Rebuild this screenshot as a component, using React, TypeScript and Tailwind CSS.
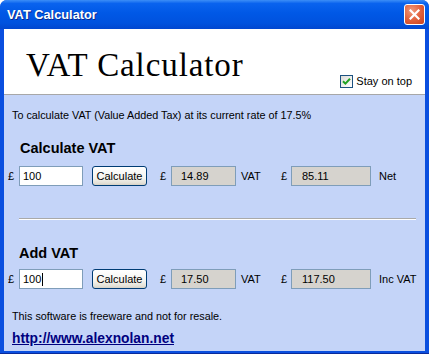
import React from "react"

const sans = "font-['Liberation_Sans',Arial,sans-serif]"

function XpButton() {
  return (
    <div className="ml-[9px] flex h-[20px] w-[55px] items-center justify-center rounded-[3px] border border-[#003c74] bg-[linear-gradient(180deg,#ffffff_0%,#f5f4ef_60%,#e3e0d6_90%,#d6d0c5_100%)] text-[11px] text-black">
      Calculate
    </div>
  )
}

function Row({ value, vat, total, label, caret }: { value: string; vat: string; total: string; label: string; caret?: boolean }) {
  return (
    <div className="flex h-[20px] items-center pl-[4px] text-[11px] text-black">
      <span className="w-[11px]">£</span>
      <div className="flex h-[20px] w-[64px] items-center border border-[#7f9db9] bg-white pl-[3px]">
        <span>{value}</span>
        {caret && <span className="ml-[1px] h-[13px] w-[1px] bg-black" />}
      </div>
      <XpButton />
      <span className="ml-[13px] w-[11px]">£</span>
      <div className="flex h-[20px] w-[65px] items-center border border-[#7f9db9] bg-[#d6d3ce] pl-[9px]">{vat}</div>
      <span className="w-[45px] pl-[5px]">VAT</span>
      <span className="w-[10px]">£</span>
      <div className="flex h-[20px] w-[80px] items-center border border-[#7f9db9] bg-[#d6d3ce] pl-[10px]">{total}</div>
      <span className="ml-[8px]">{label}</span>
    </div>
  )
}

export default function App() {
  return (
    <div className={`${sans} flex h-[354px] w-[429px] flex-col overflow-hidden rounded-t-[7px] border-b border-[#0a2a9a] bg-[#0a4fdf]`}>
      {/* Title bar */}
      <div className="flex h-[29px] shrink-0 items-center bg-[linear-gradient(180deg,#3c8ef7_0%,#0a63ee_12%,#0058e6_45%,#0052de_80%,#0147cf_100%)] pl-[7px] pr-[4px]">
        <span className="text-[12.8px] font-bold text-white [text-shadow:1px_1px_0_#0b2a8f]">VAT Calculator</span>
        <div className="ml-auto flex h-[21px] w-[21px] items-center justify-center rounded-[3px] border border-white bg-[radial-gradient(circle_at_35%_30%,#f09a7c_0%,#e2623d_50%,#c8401c_100%)]">
          <svg width="11" height="11" viewBox="0 0 11 11">
            <path d="M1.5 1.5 L9.5 9.5 M9.5 1.5 L1.5 9.5" stroke="white" strokeWidth="2.2" strokeLinecap="square" />
          </svg>
        </div>
      </div>

      {/* Client area */}
      <div className="mx-[4px] mb-[2px] flex flex-1 flex-col">
        <div className="flex h-[65px] shrink-0 bg-white">
          <div className="pl-[22px] pt-[20px] font-['Liberation_Serif','Times_New_Roman',serif] text-[33px] leading-[33px] tracking-[0.9px] text-black">
            VAT Calculator
          </div>
          <div className="ml-auto mr-[13px] mt-[46px] flex h-[13px] items-center text-[11px] text-black">
            <div className="flex h-[13px] w-[13px] items-center justify-center border border-[#1c5180] bg-[linear-gradient(135deg,#dcdcd7,#ffffff)]">
              <svg width="9" height="9" viewBox="0 0 9 9">
                <path d="M1 4.2 L3.4 6.6 L8 1.8" fill="none" stroke="#21a121" strokeWidth="2" />
              </svg>
            </div>
            <span className="ml-[3px]">Stay on top</span>
          </div>
        </div>
        <div className="h-[1px] shrink-0 bg-[#a7a7a7]" />

        <div className="flex flex-1 flex-col bg-[#c4d4f8]">
          <p className="mt-[14px] pl-[8px] text-[10.8px] leading-[13px] text-black">
            To calculate VAT (Value Added Tax) at its current rate of 17.5%
          </p>
          <h2 className="mt-[18px] pl-[16px] text-[14.5px] font-bold leading-[16px] text-black">Calculate VAT</h2>
          <div className="mt-[10px]">
            <Row value="100" vat="14.89" total="85.11" label="Net" />
          </div>
          <div className="ml-[15px] mr-[9px] mt-[32px] h-[1px] bg-[#a9a9a9]" />
          <div className="ml-[15px] mr-[9px] h-[1px] bg-white" />
          <h2 className="mt-[25px] pl-[15px] text-[14.5px] font-bold leading-[16px] text-black">Add VAT</h2>
          <div className="mt-[8px]">
            <Row value="100" vat="17.50" total="117.50" label="Inc VAT" caret />
          </div>
          <p className="mt-[21px] pl-[8px] text-[10.8px] leading-[13px] text-black">
            This software is freeware and not for resale.
          </p>
          <a className="mt-[8px] pl-[8px] text-[13.8px] font-bold leading-[16px] text-[#00007f] underline">
            http://www.alexnolan.net
          </a>
        </div>
      </div>
    </div>
  )
}
